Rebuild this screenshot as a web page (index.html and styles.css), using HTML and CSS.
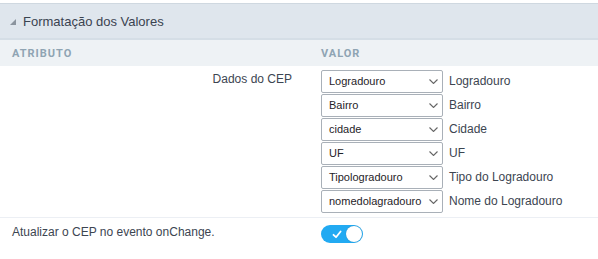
FILE: index.html
```html
<!DOCTYPE html>
<html lang="pt-BR">
  <head>
    <meta charset="UTF-8" />
    <title>Formatação dos Valores</title>
    <link rel="stylesheet" href="styles.css">
  </head>
  <body>
    <div class="panel">
      <div class="panel-title">
        <span class="caret"></span>
        Formatação dos Valores
      </div>
      <div class="cols">
        <div class="col-attr">ATRIBUTO</div>
        <div class="col-val">VALOR</div>
      </div>
      <div class="row">
        <div class="attr attr-right">Dados do CEP</div>
        <div class="val">
          <div class="map">
            <div class="select"><span>Logradouro</span><svg class="chev" width="9" height="5" viewBox="0 0 9 5"><path d="M0.5 0.5 L4.5 4.5 L8.5 0.5" fill="none" stroke="#666" stroke-width="1.1"/></svg></div>
            <span class="map-label">Logradouro</span>
          </div>
          <div class="map">
            <div class="select"><span>Bairro</span><svg class="chev" width="9" height="5" viewBox="0 0 9 5"><path d="M0.5 0.5 L4.5 4.5 L8.5 0.5" fill="none" stroke="#666" stroke-width="1.1"/></svg></div>
            <span class="map-label">Bairro</span>
          </div>
          <div class="map">
            <div class="select"><span>cidade</span><svg class="chev" width="9" height="5" viewBox="0 0 9 5"><path d="M0.5 0.5 L4.5 4.5 L8.5 0.5" fill="none" stroke="#666" stroke-width="1.1"/></svg></div>
            <span class="map-label">Cidade</span>
          </div>
          <div class="map">
            <div class="select"><span>UF</span><svg class="chev" width="9" height="5" viewBox="0 0 9 5"><path d="M0.5 0.5 L4.5 4.5 L8.5 0.5" fill="none" stroke="#666" stroke-width="1.1"/></svg></div>
            <span class="map-label">UF</span>
          </div>
          <div class="map">
            <div class="select"><span>Tipologradouro</span><svg class="chev" width="9" height="5" viewBox="0 0 9 5"><path d="M0.5 0.5 L4.5 4.5 L8.5 0.5" fill="none" stroke="#666" stroke-width="1.1"/></svg></div>
            <span class="map-label">Tipo do Logradouro</span>
          </div>
          <div class="map">
            <div class="select"><span>nomedolagradouro</span><svg class="chev" width="9" height="5" viewBox="0 0 9 5"><path d="M0.5 0.5 L4.5 4.5 L8.5 0.5" fill="none" stroke="#666" stroke-width="1.1"/></svg></div>
            <span class="map-label">Nome do Logradouro</span>
          </div>
        </div>
      </div>
      <div class="row row-line">
        <div class="attr">Atualizar o CEP no evento onChange.</div>
        <div class="val">
          <div class="toggle">
            <svg class="check" width="10" height="9" viewBox="0 0 10 9">
              <path d="M1.5 4.8 L4 7.2 L8.6 1.5" fill="none" stroke="#fff" stroke-width="1.8" stroke-linecap="round" stroke-linejoin="round"/>
            </svg>
            <span class="knob"></span>
          </div>
        </div>
      </div>
    </div>
  </body>
</html>
```

FILE: styles.css
```css
body {
  margin: 0;
  padding-top: 3px;
  font-family: "Liberation Sans", Arial, sans-serif;
  color: #3c4551;
  background: #fff;
}
.panel {
  width: 598px;
}
.panel-title {
  display: flex;
  align-items: center;
  padding-left: 10px;
  background: #dfe6ed;
  border-top: 1px solid #cfd8e0;
  border-bottom: 2px solid #d5dee6;
  font-size: 13px;
  color: #3a4350;
  box-sizing: border-box;
  height: 37px;
}
.caret {
  width: 0;
  height: 0;
  border-left: 6px solid transparent;
  border-bottom: 6px solid #8b949e;
  margin-right: 7px;
  margin-top: 2px;
}
.cols {
  display: flex;
  height: 26px;
  align-items: center;
  background: #eef2f5;
  font-family: Roboto, "Liberation Sans", sans-serif;
  font-size: 11px;
  font-weight: bold;
  letter-spacing: 1px;
  color: #8fa4b3;
}
.col-attr {
  width: 321px;
  padding-left: 12px;
  box-sizing: border-box;
}
.row {
  display: flex;
}
.attr {
  width: 321px;
  padding-left: 12px;
  padding-right: 29px;
  box-sizing: border-box;
  font-size: 12px;
  color: #3c4551;
}
.attr-right {
  text-align: right;
  padding-top: 6px;
}
.val {
  display: flex;
  flex-direction: column;
  padding-top: 3px;
  padding-bottom: 4px;
}
.map {
  display: flex;
  align-items: center;
  height: 24px;
}
.select {
  width: 122px;
  height: 23px;
  box-sizing: border-box;
  border: 1px solid #a9b0b8;
  border-radius: 2px;
  display: flex;
  align-items: center;
  justify-content: space-between;
  padding: 0 4px 0 7px;
  font-size: 11px;
  color: #1f2328;
}
.chev {
  margin-top: 1px;
}
.map-label {
  margin-left: 6px;
  font-size: 12px;
  color: #3c4551;
}
.row-line {
  border-top: 1px solid #eceff4;
  padding-top: 7px;
  align-items: flex-start;
}
.row-line .val {
  padding-top: 0;
}
.toggle {
  width: 42px;
  height: 18px;
  border-radius: 9px;
  background: #22aaf2;
  display: flex;
  align-items: center;
  justify-content: space-between;
  padding: 0 1px 0 11px;
  box-sizing: border-box;
}
.knob {
  width: 16px;
  height: 16px;
  border-radius: 50%;
  background: #fff;
  box-shadow: 0 0 1px rgba(0, 0, 0, 0.3);
}
```
